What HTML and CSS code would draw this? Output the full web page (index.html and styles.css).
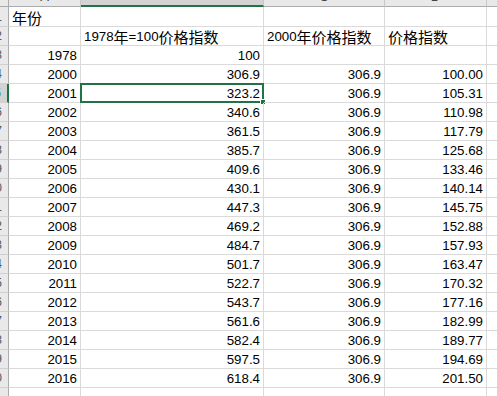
FILE: index.html
```html
<!DOCTYPE html>
<html lang="zh-CN">

<head>
    <meta charset="UTF-8">
    <meta name="viewport" content="width=device-width, initial-scale=1.0">
    <title>价格指数</title>
    <link rel="stylesheet" href="styles.css">
</head>

<body>
    <div class="sheet" id="sheet">
        <div class="row col-head">
            <div class="cell rh corner"></div>
            <div class="cell ch col-a">A</div>
            <div class="cell ch col-b active">B</div>
            <div class="cell ch col-c">C</div>
            <div class="cell ch col-d">D</div>
            <div class="cell ch col-e">E</div>
        </div>
        <div class="row first">
            <div class="cell rh">1</div>
            <div class="cell col-a"><span class="cjk">年份</span></div>
            <div class="cell col-b"></div>
            <div class="cell col-c"></div>
            <div class="cell col-d"></div>
            <div class="cell col-e"></div>
        </div>
        <div class="row">
            <div class="cell rh">2</div>
            <div class="cell col-a"></div>
            <div class="cell col-b">1978<span class="cjk">年</span>=100<span class="cjk">价格指数</span></div>
            <div class="cell col-c">2000<span class="cjk">年价格指数</span></div>
            <div class="cell col-d"><span class="cjk">价格指数</span></div>
            <div class="cell col-e"></div>
        </div>
        <!-- rows from data below -->
    </div>

    <script>
        const data = [
            ["1978", "100", "", ""],
            ["2000", "306.9", "306.9", "100.00"],
            ["2001", "323.2", "306.9", "105.31"],
            ["2002", "340.6", "306.9", "110.98"],
            ["2003", "361.5", "306.9", "117.79"],
            ["2004", "385.7", "306.9", "125.68"],
            ["2005", "409.6", "306.9", "133.46"],
            ["2006", "430.1", "306.9", "140.14"],
            ["2007", "447.3", "306.9", "145.75"],
            ["2008", "469.2", "306.9", "152.88"],
            ["2009", "484.7", "306.9", "157.93"],
            ["2010", "501.7", "306.9", "163.47"],
            ["2011", "522.7", "306.9", "170.32"],
            ["2012", "543.7", "306.9", "177.16"],
            ["2013", "561.6", "306.9", "182.99"],
            ["2014", "582.4", "306.9", "189.77"],
            ["2015", "597.5", "306.9", "194.69"],
            ["2016", "618.4", "306.9", "201.50"],
            ["", "", "", ""]
        ];

        const sheet = document.getElementById("sheet");
        data.forEach((item, i) => {
            const rowNum = i + 3;
            const selected = item[0] === "2001";
            const row = document.createElement("div");
            row.className = "row";
            row.innerHTML = `
                <div class="cell rh${selected ? " active" : ""}">${rowNum}</div>
                <div class="cell num col-a">${item[0]}</div>
                <div class="cell num col-b${selected ? " selected" : ""}">${item[1]}${selected ? '<span class="sel"><span class="handle"></span></span>' : ""}</div>
                <div class="cell num col-c">${item[2]}</div>
                <div class="cell num col-d">${item[3]}</div>
                <div class="cell col-e"></div>
            `;
            sheet.appendChild(row);
        });
    </script>
</body>

</html>
```

FILE: styles.css
```css
* {
    margin: 0;
    padding: 0;
    box-sizing: border-box;
}

body {
    background: #ffffff;
    color: #000000;
    font-family: "Liberation Sans", Arial, sans-serif;
    font-size: 13.3px;
    overflow: hidden;
}

.sheet {
    margin: -14px 0 0 -21px;
    width: 560px;
}

.row {
    display: flex;
    height: 19px;
}

.row.first {
    height: 20px;
}

.row.col-head {
    height: 21px;
}

.cell {
    position: relative;
    flex: none;
    display: flex;
    align-items: flex-end;
    height: 100%;
    padding: 0 3px 1px 3px;
    border-right: 1px solid #dadada;
    border-bottom: 1px solid #dadada;
    white-space: nowrap;
    line-height: 15px;
}

.cell.num {
    justify-content: flex-end;
}

.cjk {
    font-family: "Noto Sans CJK SC", "Liberation Sans", sans-serif;
    font-size: 15px;
    line-height: 15px;
}

.col-a { width: 72px; }
.col-b { width: 183px; }
.col-c { width: 121px; }
.col-d { width: 102px; }
.col-e { width: 100px; }

.rh {
    width: 30px;
    justify-content: flex-end;
    padding-right: 6px;
    background: #e9e9e9;
    color: #555555;
    font-size: 12px;
    border-right: 1px solid #ababab;
    border-bottom: 1px solid #d0d0d0;
}

.rh.active {
    background: #d3d3d3;
    color: #217346;
    border-right: 2px solid #217346;
}

.ch {
    justify-content: center;
    padding-bottom: 2px;
    background: #e9e9e9;
    color: #444444;
    font-size: 13px;
    border-right: 1px solid #c8c8c8;
    border-bottom: 1px solid #ababab;
}

.ch.active {
    background: #d3d3d3;
    color: #217346;
    border-bottom: 2px solid #217346;
}

.corner {
    border-bottom: 1px solid #ababab;
}

.sel {
    position: absolute;
    left: -1px;
    top: -1px;
    right: -1px;
    bottom: -1px;
    border: 2px solid #217346;
}

.handle {
    position: absolute;
    right: -4px;
    bottom: -4px;
    width: 6px;
    height: 6px;
    background: #217346;
    border: 1px solid #ffffff;
}
```
